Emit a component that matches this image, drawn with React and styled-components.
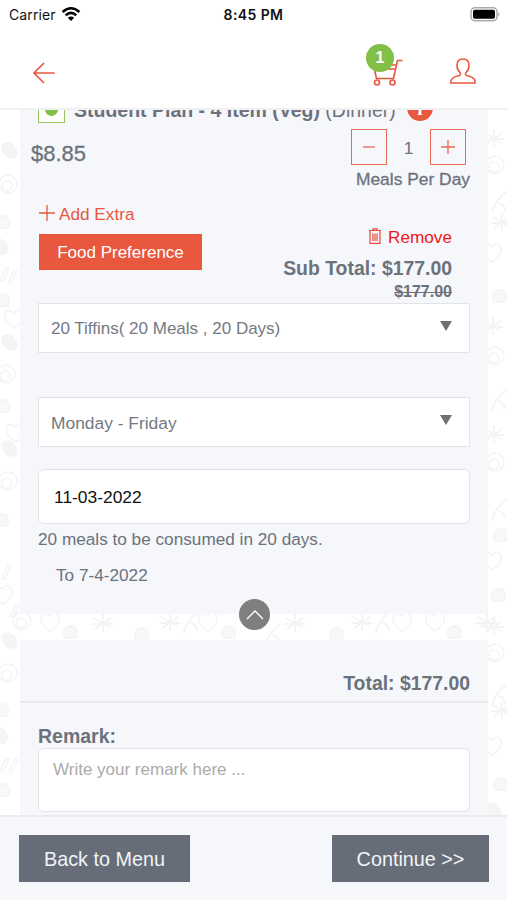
import React, { useState } from 'react'
import styled, { createGlobalStyle } from 'styled-components'

const doodles = [
    [10, 40, 'leaf'], [8, 74, 'ring'], [3, 112, 'blob'], [1, 136, 'leaf'], [4, 164, 'stick'], [12, 166, 'stick'], [3, 190, 'blob'], [14, 208, 'heart'],
    [10, 232, 'leaf'], [6, 264, 'ring'], [3, 296, 'blob'], [16, 322, 'heart'], [10, 338, 'leaf'], [8, 371, 'ring'], [2, 410, 'blob'], [6, 462, 'stick'],
    [3, 484, 'heart'], [14, 500, 'stick'], [10, 530, 'leaf'], [8, 563, 'ring'], [2, 600, 'blob'], [1, 625, 'leaf'], [4, 655, 'stick'], [13, 655, 'stick'], [3, 680, 'blob'],
    [494, 28, 'star'], [495, 55, 'ring'], [500, 92, 'stem'], [502, 112, 'star'], [492, 142, 'heart'], [500, 186, 'blob'], [493, 216, 'star'],
    [495, 246, 'ring'], [500, 290, 'stem'], [494, 324, 'star'], [495, 352, 'ring'], [500, 400, 'stem'], [501, 425, 'blob'], [492, 450, 'heart'], [499, 485, 'blob'],
    [494, 516, 'star'], [495, 543, 'ring'], [500, 585, 'stem'], [502, 600, 'star'], [492, 635, 'heart'], [501, 674, 'blob'], [494, 700, 'leaf'],
    [22, 511, 'ring'], [50, 511, 'heart'], [71, 522, 'blob'], [103, 513, 'star'], [142, 524, 'blob'], [170, 512, 'star'], [192, 512, 'stem'],
    [208, 511, 'heart'], [229, 522, 'blob'], [274, 524, 'stem'], [295, 513, 'star'], [337, 524, 'blob'], [362, 512, 'star'], [384, 512, 'stem'],
    [402, 511, 'heart'], [435, 511, 'heart'], [455, 522, 'blob'], [487, 512, 'star'],
]

const Doodle = ({ x, y, kind }) => (
    <g transform={`translate(${x} ${y})`}>
        {kind === 'leaf' && <path fill="#f5f5f5" d="M-8-5Q-3-9 3-5Q10 4 4 8Q-3 9-7 2Z" />}
        {kind === 'ring' && <><circle r="9" /><circle r="5" cx="-1" cy="2" /></>}
        {kind === 'blob' && <path fill="#f8f8f8" d="M-6-3Q-2-8 4-5Q8-1 5 6H-6Q-9 1-6-3Z" />}
        {kind === 'stick' && <path d="M-4 6L2-6L5-5L-1 7Z" />}
        {kind === 'heart' && <path d="M-9-6Q-11 4 0 10Q11 3 9-5Q4-11 0-5Q-5-9-9-6Z" />}
        {kind === 'star' && <path strokeWidth="2" d="M0-9V9M-9-5L8 5M-8 6L8-5M-11 1H10" />}
        {kind === 'stem' && <path strokeWidth="2" d="M-8 11Q-6-1 7-11M-2 1Q5 2 5 9" />}
    </g>
)

const App = () => {
    const [meals, setMeals] = useState(1)
    const [open, setOpen] = useState(true)

    return (
        <Screen>
            <GlobalStyle />
            <StatusBar>
                <Carrier>
                    Carrier
                    <svg width="20" height="16" viewBox="0 0 20 16" fill="none" stroke="#000" strokeWidth="2.5">
                        <path d="M1.6 6Q10-1.6 18.4 6" />
                        <path d="M4.7 9.2Q10 4.6 15.3 9.2" />
                        <path d="M10 15L6.8 11.8Q10 9.2 13.2 11.8Z" fill="#000" stroke="none" />
                    </svg>
                </Carrier>
                <Time>8:45 PM</Time>
                <Battery>
                    <svg width="31" height="15" viewBox="0 0 31 15">
                        <rect x="1" y=".8" width="26" height="13" rx="4" fill="#fff" stroke="#aaa" strokeWidth="1.5" />
                        <rect x="3" y="2.8" width="22" height="9" rx="1.8" />
                        <path d="M28.4 5Q31 7.3 28.4 9.6Z" fill="#aaa" />
                    </svg>
                </Battery>
            </StatusBar>
            <Header>
                <IconButton aria-label="Back">
                    <svg width="22" height="24" viewBox="0 -2 22 24">
                        <path d="M21.5 11H1M11 1L1 11L11 21" />
                    </svg>
                </IconButton>
                <HeaderActions>
                    <IconButton aria-label="Cart">
                        <svg width="31" height="27" viewBox="0 0 31 27">
                            <path d="M30.5 1.5H25.5L21.5 19.5H4.5L1.5 6H24.3M2 10H23.3" />
                            <circle cx="5" cy="23.5" r="2.5" />
                            <circle cx="20.5" cy="23.5" r="2.5" />
                        </svg>
                        <Badge>1</Badge>
                    </IconButton>
                    <IconButton aria-label="Account">
                        <svg width="26" height="28" viewBox="0 0 26 28">
                            <path d="M1 25V22.5Q2 19 9.5 17.5Q11 17 10.3 15Q7 12 7 7.5Q7 1 13 1Q19 1 19 7.5Q19 12 15.7 15Q15 17 16.5 17.5Q24 19 25 22.5V25Z" />
                        </svg>
                    </IconButton>
                </HeaderActions>
            </Header>
            <Content>
                <Doodles width="507" height="705" fill="none" stroke="#f4f4f4" strokeWidth="1.5">
                    {doodles.map(([x, y, kind]) => <Doodle key={`${x}-${y}`} x={x} y={y} kind={kind} />)}
                </Doodles>
                <PlanCard>
                    <TitleRow>
                        <VegMark />
                        <Title><b>Student Plan - 4 Item (Veg)</b> (Dinner)</Title>
                        <Info>i</Info>
                    </TitleRow>
                    <PriceRow>
                        <Price>$8.85</Price>
                        <Quantity>
                            <Stepper>
                                <StepButton onClick={() => setMeals(Math.max(1, meals - 1))}>
                                    <svg width="14" height="14"><path d="M1 7H13" /></svg>
                                </StepButton>
                                <Count>{meals}</Count>
                                <StepButton onClick={() => setMeals(meals + 1)}>
                                    <svg width="14" height="14"><path d="M0 7H14M7 0V14" /></svg>
                                </StepButton>
                            </Stepper>
                            <QuantityLabel>Meals Per Day</QuantityLabel>
                        </Quantity>
                    </PriceRow>
                    <ActionRow>
                        <Extras>
                            <AddExtra>
                                <svg width="16" height="16"><path d="M0 7H16M8 -1V15" /></svg>
                                Add Extra
                            </AddExtra>
                            <Preference>Food Preference</Preference>
                        </Extras>
                        <Summary>
                            <Remove>
                                <svg width="12" height="19" viewBox="0 0 12 19">
                                    <path d="M0 2.5H12M4 2V.8H8V2M1 3V15.3H11V3M3.9 5.5V13M6 5.5V13M8.1 5.5V13" />
                                </svg>
                                Remove
                            </Remove>
                            <SubTotal>Sub Total: $177.00</SubTotal>
                            <OldPrice>$177.00</OldPrice>
                        </Summary>
                    </ActionRow>
                    <Select>20 Tiffins( 20 Meals , 20 Days)<Caret /></Select>
                    <Select $days>Monday - Friday<Caret /></Select>
                    <DateField defaultValue="11-03-2022" />
                    <Note>20 meals to be consumed in 20 days.</Note>
                    <EndDate>To 7-4-2022</EndDate>
                    <Collapse onClick={() => setOpen(!open)}>
                        <svg width="18" height="10"><path d="M1 9L9 1L17 9" /></svg>
                    </Collapse>
                </PlanCard>
                <TotalCard>
                    <Total>Total: $177.00</Total>
                    <RemarkLabel>Remark:</RemarkLabel>
                    <Remark placeholder="Write your remark here ..." />
                </TotalCard>
            </Content>
            <Footer>
                <FooterButton $width="171px">Back to Menu</FooterButton>
                <FooterButton $width="157px">Continue &gt;&gt;</FooterButton>
            </Footer>
        </Screen>
    )
}

export default App;

const GlobalStyle = createGlobalStyle`
    *{
        box-sizing:border-box;
    }
    body{
        margin:0;
        background-color:white;
    }
    button, input, textarea{
        font-family:inherit;
        margin:0;
    }
`;

const Screen = styled.div`
    width:507px;
    height:900px;
    display:flex;
    flex-direction:column;
    overflow:hidden;
    font-family:"Liberation Sans", Arial, sans-serif;
    font-size:17.2px;
    color:#6c727b;
`;

const StatusBar = styled.div`
    height:28px;
    flex:none;
    display:grid;
    grid-template-columns:1fr auto 1fr;
    align-items:center;
    padding:0 6px 0 9px;
    font-family:Inter, sans-serif;
    font-size:14px;
    color:#111;
`;

const Carrier = styled.div`
    display:flex;
    align-items:center;
    gap:5px;
    letter-spacing:0.1px;
`;

const Time = styled.div`
    margin-left:-3px;
    font-weight:600;
    letter-spacing:0.4px;
`;

const Battery = styled.div`
    display:flex;
    justify-content:flex-end;
`;

const Header = styled.header`
    height:82px;
    flex:none;
    display:flex;
    align-items:center;
    justify-content:space-between;
    padding:8px 31px 0 33px;
    border-bottom:2px solid #f0f0f1;
`;

const HeaderActions = styled.div`
    display:flex;
    align-items:center;
    gap:47px;
`;

const IconButton = styled.button`
    position:relative;
    display:flex;
    padding:0;
    border:0;
    background:none;
    svg{
        fill:none;
        stroke:#e9573f;
        stroke-width:1.6;
    }
`;

const Badge = styled.span`
    position:absolute;
    left:-6px;
    top:-15px;
    width:28px;
    height:28px;
    border-radius:50%;
    background-color:#82bf47;
    color:white;
    font-size:16px;
    font-weight:bold;
    line-height:27px;
    text-align:center;
`;

const Content = styled.main`
    position:relative;
    flex:1;
    min-height:0;
    overflow:hidden;
    padding:0 19px 0 20px;
`;

const Doodles = styled.svg`
    position:absolute;
    left:0;
    top:0;
`;

const Card = styled.section`
    position:relative;
    background-color:#f5f7fb;
    padding:0 18px;
`;

/* the list is scrolled, so the title is partly under the header */
const PlanCard = styled(Card)`
    height:519px;
    margin-top:-15px;
`;

const TitleRow = styled.div`
    height:31px;
    display:flex;
    align-items:center;
`;

const VegMark = styled.div`
    width:27px;
    height:27px;
    flex:none;
    margin-top:-2px;
    display:flex;
    align-items:center;
    justify-content:center;
    border:1.5px solid #93c663;
    background-color:white;
    &::after{
        content:'';
        width:13px;
        height:13px;
        border-radius:50%;
        background-color:#82bf47;
    }
`;

const Title = styled.div`
    margin-left:9px;
    font-size:19.5px;
    white-space:nowrap;
`;

const Info = styled.div`
    width:26px;
    height:26px;
    margin:-5px 0 0 11px;
    border-radius:50%;
    background-color:#e9573f;
    color:white;
    font-family:"Liberation Serif", serif;
    font-size:19px;
    font-weight:bold;
    line-height:28px;
    text-align:center;
`;

const PriceRow = styled.div`
    height:76px;
    display:flex;
    justify-content:space-between;
`;

const Price = styled.div`
    margin:15px 0 0 -7px;
    font-size:22px;
    line-height:26px;
    -webkit-text-stroke:0.3px;
`;

const Quantity = styled.div`
    padding-top:3px;
`;

const Stepper = styled.div`
    width:115px;
    margin-left:auto;
    margin-right:4px;
    display:flex;
    align-items:center;
    justify-content:space-between;
`;

const Count = styled.span`
    padding-top:2px;
`;

const StepButton = styled.button`
    width:36px;
    height:36px;
    padding:0;
    display:flex;
    align-items:center;
    justify-content:center;
    border:1.5px solid #ea6a57;
    background:none;
    svg{
        stroke:#ea6a57;
        stroke-width:1.3;
    }
`;

const QuantityLabel = styled.div`
    margin-top:3px;
    font-size:17.4px;
    line-height:22px;
    text-align:right;
    -webkit-text-stroke:0.3px;
`;

const ActionRow = styled.div`
    height:101px;
    display:flex;
    justify-content:space-between;
`;

const Extras = styled.div`
    padding-left:1px;
`;

const AddExtra = styled.div`
    height:24px;
    display:flex;
    align-items:center;
    gap:4px;
    color:#e9573f;
    svg{
        overflow:visible;
        stroke:#e9573f;
        stroke-width:1.3;
    }
`;

const Preference = styled.button`
    width:163px;
    height:36px;
    margin-top:8px;
    padding:2px 0 0;
    border:0;
    background-color:#e9573f;
    color:white;
    font-size:17px;
`;

const Summary = styled.div`
    padding:22px 18px 0 0;
    display:flex;
    flex-direction:column;
    align-items:flex-end;
`;

const Remove = styled.div`
    height:26px;
    display:flex;
    align-items:center;
    gap:7px;
    color:#f01818;
    svg{
        fill:none;
        stroke:#ea4a3a;
        stroke-width:1.2;
    }
`;

const SubTotal = styled.div`
    margin-top:6px;
    font-size:19.4px;
    font-weight:bold;
    line-height:24px;
`;

const OldPrice = styled.div`
    margin-top:2px;
    font-size:16px;
    font-weight:bold;
    line-height:20px;
    text-decoration:line-through;
`;

const Select = styled.div`
    height:50px;
    margin-top:${({ $days }) => ($days ? '44px' : '0')};
    padding:2px 17px 0 12px;
    display:flex;
    align-items:center;
    justify-content:space-between;
    border:1.5px solid #e1e3e6;
    background-color:white;
    color:#747a82;
    font-size:${({ $days }) => ($days ? '17.4px' : '17px')};
`;

const Caret = styled.span`
    margin-top:-6px;
    border:6px solid transparent;
    border-top:10px solid #707070;
    border-bottom:0;
`;

const DateField = styled.input`
    display:block;
    width:100%;
    height:55px;
    margin-top:22px;
    padding:2px 15px 0;
    border:1.5px solid #e1e3e6;
    border-radius:6px;
    background-color:white;
    color:#111;
    font-size:17.4px;
`;

const Note = styled.div`
    margin-top:4px;
    line-height:22px;
`;

const EndDate = styled.div`
    margin:14px 0 0 18px;
    line-height:22px;
`;

const Collapse = styled.button`
    position:absolute;
    left:219px;
    bottom:-16px;
    width:31px;
    height:31px;
    padding:0;
    display:flex;
    align-items:center;
    justify-content:center;
    border:0;
    border-radius:50%;
    background-color:#7f7f7f;
    svg{
        fill:none;
        stroke:white;
        stroke-width:1.3;
    }
`;

const TotalCard = styled(Card)`
    height:200px;
    margin-top:26px;
`;

const Total = styled.div`
    height:63px;
    margin:0 -18px;
    padding:31px 18px 0;
    border-bottom:2px solid #e8eaed;
    font-size:19.4px;
    font-weight:bold;
    line-height:24px;
    text-align:right;
`;

const RemarkLabel = styled.div`
    margin-top:21px;
    font-size:19.5px;
    font-weight:bold;
    line-height:24px;
`;

const Remark = styled.textarea`
    display:block;
    width:100%;
    height:64px;
    padding:11px 14px;
    border:1.5px solid #e1e3e6;
    border-radius:6px;
    background-color:white;
    font-size:17px;
    resize:none;
    &::placeholder{
        color:#aaa;
    }
`;

const Footer = styled.footer`
    position:relative;
    height:85px;
    flex:none;
    display:flex;
    justify-content:space-between;
    padding:18px 18px 0 19px;
    border-top:2px solid #e9ebed;
    background-color:#f5f7fb;
`;

const FooterButton = styled.button`
    width:${({ $width }) => $width};
    height:47px;
    padding:2px 0 0;
    border:0;
    background-color:#666d78;
    color:#f1f4f8;
    font-size:19.8px;
`;
